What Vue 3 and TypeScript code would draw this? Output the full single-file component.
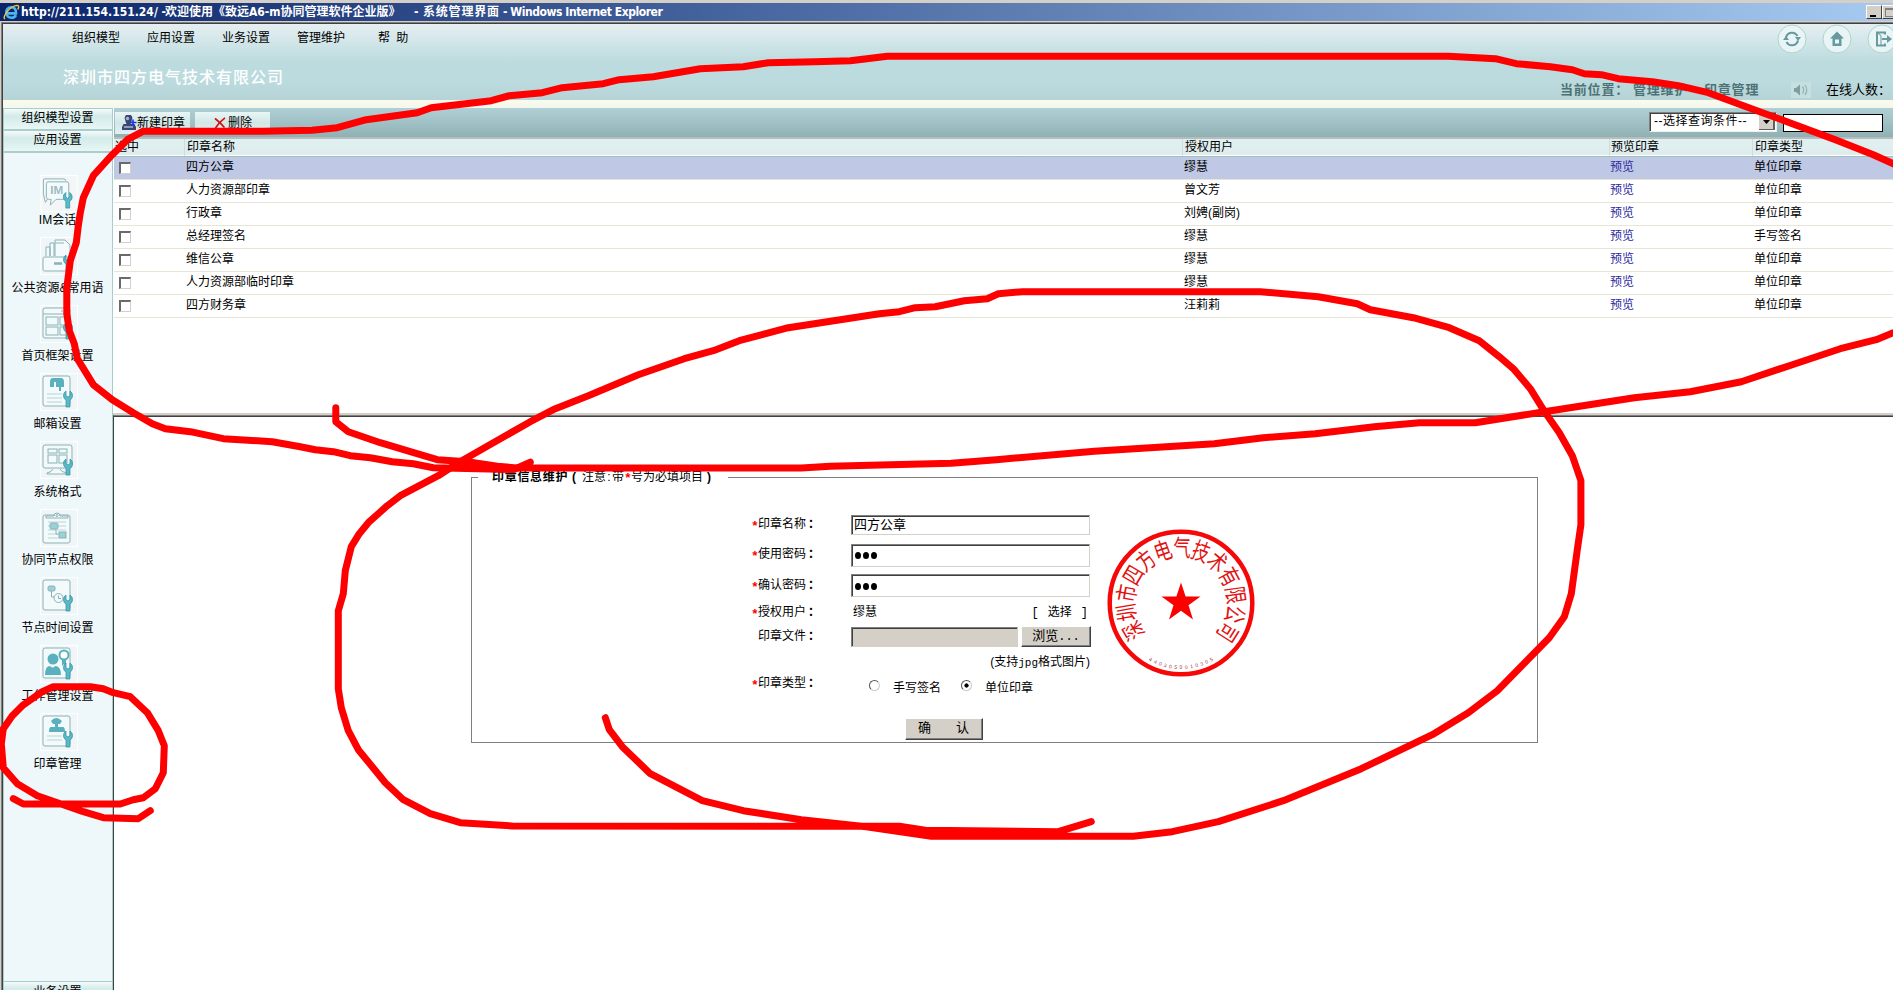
<script setup lang="ts">
interface Seal {
  name: string
  user: string
  kind: string
}

interface NavItem {
  label: string
  icon: string
}

const menus: string[] = ['组织模型', '应用设置', '业务设置', '管理维护', '帮 助']

const seals: Seal[] = [
  { name: '四方公章', user: '缪慧', kind: '单位印章' },
  { name: '人力资源部印章', user: '曾文芳', kind: '单位印章' },
  { name: '行政章', user: '刘娉(副岗)', kind: '单位印章' },
  { name: '总经理签名', user: '缪慧', kind: '手写签名' },
  { name: '维信公章', user: '缪慧', kind: '单位印章' },
  { name: '人力资源部临时印章', user: '缪慧', kind: '单位印章' },
  { name: '四方财务章', user: '汪莉莉', kind: '单位印章' },
]

const navItems: NavItem[] = [
  { label: 'IM会话', icon: 'im' },
  { label: '公共资源&常用语', icon: 'drawer' },
  { label: '首页框架设置', icon: 'frame' },
  { label: '邮箱设置', icon: 'mail' },
  { label: '系统格式', icon: 'screen' },
  { label: '协同节点权限', icon: 'clipboard' },
  { label: '节点时间设置', icon: 'time' },
  { label: '工作管理设置', icon: 'person' },
  { label: '印章管理', icon: 'seal' },
]

const company = '深圳市四方电气技术有限公司'
const sealChars = company.split('').map((c, i) => ({ c, turn: `rotate(${(i - 6) * 20.2 + 1})` }))
const sealDigits = '4403050010305'.split('').map((c, i) => ({ c, turn: `rotate(${(6 - i) * 4.7})` }))

const strokes: string[] = [
  '1893,163 1873,154 1835,139 1784,120 1754,109 1708,92 1678,85 1652,81 1618,78 1601,74 1584,73 1572,69 1550,66 1516,63 1495,58 1448,55.5 887,55.5 850,60 815,61 768,62 743,66 700,68 653,76 619,79 603,83 562,87 542,92 509,95 491,100 431,107 417,112 366,119 337,127 312,129.5 263,130.5 143,130.5 127,139 112,154 93,175 83,197 80,212 78,225 76,242 70,260 66.5,287 66.5,313 69,330 74,343 77,358 93,384 112,399 133,412 152,423 165,428 190,431 223,438 272,441 300,446 315,449 333,451 350,455 370,457 392,461 413,463 433,467 513,469 530,461.5',
  '335.5,407 335.5,421 348,431 380,442 410,451 437,459 467,461 497,465.5 517,467.3 801,467.3 830,465.5 951,462.5 996,459 1094,450.6 1214,443 1263,437 1315,433 1374,426 1419,422 1475,422 1544,411 1634,397 1690,391 1741,381 1792,364 1840,348 1876,339 1893,332',
  '1091,821 1058,831 925,829.5 899,825.6 512,825.3 460,822 430,813 403,799 385,782 358,749 348,730 341,707 338,688 338,610 343,593 345,570 351,546 359,533 368,522 387,505 400,495 438,475 458,462 493,442 530,421 555,408 588,395 638,374 684,358 713,350 739,340 788,327 879,313 899,311 915,307 935,306 964,300 987,298 998,293 1022,291 1260,291 1318,296 1357,303 1370,309 1413,317 1449,327 1479,340 1499,356 1514,369 1530,388 1543,409 1559,432 1572,455 1580.6,480 1580.6,524 1577,549 1571,593 1564,616 1549,637 1497,690 1468,712 1432,734 1361,768 1283,800 1218,821 1172,831 1133,835.6 931,835.6 866,826 801,819 743,810 702,800 650,773 622,746 609,729 605,717',
  '13,798 23,803.3 120,803.3 133,799 143,797 155,788 163,772 164,745 158,730 147,712 130,696 113,692 103,688 90,686 53,686 42,691 22,705 12,715 3,728 1,743 3,767 17,783 37,795 60,803 83,811 103,817 138,818 150,810',
]
</script>

<template>
  <div class="window" lang="zh-CN">
    <div class="titlebar">
      <svg class="ie" viewBox="0 0 18 18">
        <path d="M3.5 10h10.3c.3-4.6-2.200-6.600-5-6.600-3.200 0-5.300 2.400-5.300 5.600 0 3.400 2.200 5.600 5.500 5.600 2.200 0 3.800-.9 4.700-2.800" fill="none" stroke="#4db5f0" stroke-width="2.800" />
        <path d="M2 16C-1 13 8 2 15 1.500c2.500 0 1.500 3 .6 4.300" fill="none" stroke="#f5c431" stroke-width="1.500" />
      </svg>
      <span class="t-url">http://211.154.151.24/ -</span>
      <span class="t-name">欢迎使用《致远A6-m协同管理软件企业版》</span>
      <span class="t-dash">-</span>
      <span class="t-page">系统管理界面</span>
      <span class="t-app">- Windows Internet Explorer</span>
      <div class="win-buttons">
        <i class="win-btn"><b class="min"></b></i>
        <i class="win-btn"><b class="max"></b></i>
      </div>
    </div>

    <div class="frame">
      <header class="header">
        <div class="header-left">
          <nav class="menu"><span v-for="m in menus" :key="m">{{ m }}</span></nav>
          <div class="company">{{ company }}</div>
        </div>
        <div class="header-right">
          <div class="round-buttons">
            <svg viewBox="0 0 30 30">
              <circle cx="15" cy="15" r="14" class="disc" />
              <path d="M9 13.500a6.200 6.200 0 0 1 11.500-1.500M21 16.500a6.200 6.200 0 0 1-11.500 1.500" class="glyph" />
              <path d="M18 13h6l-3 4zM6 16h6l-3-4z" class="solid" />
            </svg>
            <svg viewBox="0 0 30 30">
              <circle cx="15" cy="15" r="14" class="disc" />
              <path d="M15 7.500l7 7h-2.500v7.500h-9v-7.500H8zM13 15.500v4h4v-4z" class="solid" fill-rule="evenodd" />
            </svg>
            <svg viewBox="0 0 30 30">
              <circle cx="15" cy="15" r="14" class="disc" />
              <path d="M18 10.500V8.500h-8v13h8v-2" class="glyph" />
              <path d="M10 8.500l4 3v10" class="glyph thin" />
              <path d="M15 14h5v-3l5 4-5 4v-3h-5z" class="solid" />
            </svg>
          </div>
          <div class="where">
            <b class="here">当前位置：</b><b class="crumb">管理维护</b><b class="sep">-</b><b class="crumb">印章管理</b>
            <svg class="sound" viewBox="0 0 20 16">
              <path d="M3 6h2l4-3.500v11L5 10H3z" fill="#7d9f9f" />
              <path d="M11.500 4.500q2.500 3.500 0 7M14 3q3.500 5 0 10" fill="none" stroke="#98b4b4" stroke-width="1.300" />
            </svg>
            <span class="online">在线人数：</span>
          </div>
        </div>
      </header>
      <div class="strip"></div>

      <div class="body">
        <aside class="sidebar">
          <div class="group">组织模型设置</div>
          <div class="group">应用设置</div>
          <div class="nav">
            <div v-for="n in navItems" :key="n.icon" class="nav-item" :class="{ first: n.icon === 'im' }">
              <svg class="nav-icon" viewBox="0 0 38 38">
                <rect x=".5" y=".5" width="37" height="37" :fill="n.icon === 'im' ? '#f3f5f6' : '#f0f6f8'" stroke="#fff" />
                <g v-if="n.icon === 'im'" class="ln">
                  <path d="M3 20V5q0-1 1-1h20q2 0 2 2" />
                  <path d="M8 7h19q2 0 2 2v14q0 2-2 2H16l-6 6 1-6H9q-3 0-3-2V9q0-2 2-2zM3 20l2 8 2-3" />
                  <text x="10" y="19.500" class="im">IM</text>
                </g>
                <g v-else-if="n.icon === 'drawer'" class="ln">
                  <path d="M6 19V10h4v9M10 19V6h4v13M15 19V3h10l5 5v11M15 6h9" />
                  <rect x="3" y="20" width="28" height="14" rx="1.500" />
                  <path d="M14 26.500h8" stroke-width="2.500" />
                </g>
                <g v-else-if="n.icon === 'frame'" class="ln">
                  <rect x="3" y="3" width="27" height="30" rx="2" />
                  <path d="M3 9h27M21 6h2" />
                  <rect x="6" y="12" width="12" height="8" /><rect x="6" y="22" width="12" height="8" />
                  <rect x="20" y="12" width="9" height="8" /><rect x="20" y="22" width="7" height="8" />
                </g>
                <g v-else-if="n.icon === 'mail'" class="ln">
                  <rect x="3" y="3" width="27" height="30" rx="2" />
                  <path d="M10 14V9q0-4 3-4h8q3 0 3 4v5h-3v4h-2v-4h-3V9h-2v5z" fill="#5ab0bd" stroke="none" />
                  <path d="M7 21h15M7 25h15M7 29h15" class="pale" />
                </g>
                <g v-else-if="n.icon === 'screen'" class="ln">
                  <rect x="3" y="4" width="29" height="23" rx="2" />
                  <rect x="8" y="8" width="9" height="4" /><rect x="19" y="8" width="8" height="4" />
                  <rect x="8" y="14" width="9" height="8" /><rect x="19" y="14" width="8" height="8" />
                  <path d="M13 28q-1 3-6 4v1h20M20 28q1 3 7 4" />
                </g>
                <g v-else-if="n.icon === 'clipboard'" class="ln">
                  <rect x="3" y="6" width="27" height="28" rx="2" />
                  <path d="M6 9V7h8q0-3 3-3t3 3h8v2z" fill="#f3fafb" /><circle cx="17" cy="6.500" r="1" />
                  <path d="M8 13h18M8 17h2M18 17h8M8 21h18M8 25h10M8 29h10" class="pale" />
                  <rect x="10" y="14" width="8" height="6" rx="1.500" fill="#9bd0d8" /><rect x="19" y="23" width="7" height="6" fill="#9bd0d8" />
                  <path d="M16 20v5h3" />
                </g>
                <g v-else-if="n.icon === 'time'" class="ln">
                  <rect x="3" y="3" width="27" height="30" rx="2" />
                  <rect x="8" y="9" width="7" height="5" rx="1.500" fill="#9bd0d8" />
                  <path d="M11.500 14v6H15" /><circle cx="18.500" cy="21" r="4.500" /><path d="M18.500 18.500v3h2.500" />
                </g>
                <g v-else-if="n.icon === 'person'" class="ln">
                  <rect x="3" y="3" width="27" height="30" rx="2" />
                  <path d="M5 30q0-9 5-9 3 3 5 0 6 0 6 9z" fill="#5ab0bd" stroke="none" />
                  <circle cx="13" cy="14" r="5.500" fill="#5ab0bd" stroke="none" />
                  <circle cx="24" cy="10" r="4.500" fill="#fff" stroke="#5ab0bd" stroke-width="2" />
                  <path d="M22 14v7l2-2 2 2v-7" fill="#5ab0bd" stroke="none" />
                </g>
                <g v-else class="ln">
                  <rect x="3" y="3" width="27" height="30" rx="2" />
                  <path d="M11 8q5-6 11 0l-2 3h-2v3h5q2 0 2 5H9q0-5 2-5h4v-3h-2z" fill="#5ab0bd" stroke="none" />
                  <path d="M7 23h15M7 27h15" class="pale" />
                </g>
                <path v-if="n.icon !== 'clipboard'" class="wrench" d="M26 18v4.500l2 1.500 2-1.500V18q3 2 2.500 5.500-.5 2.500-2.500 3.500v7h-4v-7q-2-1-2.500-3.500Q23 20 26 18z" />
              </svg>
              <span>{{ n.label }}</span>
            </div>
          </div>
          <div class="group last">业务设置</div>
        </aside>

        <main class="main">
          <section class="list">
            <div class="toolbar">
              <div class="tool">
                <svg class="stamp-ico" viewBox="0 0 16 16">
                  <path d="M4 4.500a3.800 3.800 0 1 1 7 0Q10.500 7 9.500 9h4l1.500 3v3H1v-3l1.500-3h3Q4.500 7 4 4.500z" fill="#3b4672" />
                  <circle cx="6.500" cy="3.500" r="1.700" fill="#a7b0d3" /><path d="M3 12h9" stroke="#eef" />
                  <path d="M12 4.500v6M9 7.500h6.500" stroke="#1433ff" stroke-width="1.600" />
                </svg>
                <span>新建印章</span>
              </div>
              <div class="tool center">
                <svg class="del-ico" viewBox="0 0 12 12"><path d="M1 1.500q4 3 9.500 9M11 .8Q5 5 1.500 11" fill="none" stroke="#cf1010" stroke-width="1.600" /></svg>
                <span>删除</span>
              </div>
              <div class="select"><span>--选择查询条件--</span><i><svg viewBox="0 0 7 4"><path d="M0 0h7L3.500 4z" /></svg></i></div>
              <div class="query"></div>
            </div>
            <div class="row head">
              <span>选中</span><span>印章名称</span><span>授权用户</span><span>预览印章</span><span>印章类型</span>
            </div>
            <div v-for="(s, i) in seals" :key="s.name" class="row" :class="{ selected: i === 0 }">
              <span><i class="check"></i></span>
              <span>{{ s.name }}</span>
              <span>{{ s.user }}</span>
              <span><a>预览</a></span>
              <span>{{ s.kind }}</span>
            </div>
          </section>

          <section class="detail">
            <fieldset class="box">
              <legend>
                <b>印章信息维护</b><b class="paren">(</b><span>注意</span><span class="colon">:</span><span>带</span><em>*</em><span>号为必填项目</span><b class="close">)</b>
              </legend>
              <div class="form">
                <div class="fields">
                  <div class="field r1"><label><em>*</em>印章名称<b>：</b></label><div class="input short">四方公章</div></div>
                  <div class="field r2"><label><em>*</em>使用密码<b>：</b></label><div class="input"><i class="dot"></i><i class="dot"></i><i class="dot"></i></div></div>
                  <div class="field r3"><label><em>*</em>确认密码<b>：</b></label><div class="input"><i class="dot"></i><i class="dot"></i><i class="dot"></i></div></div>
                  <div class="field r4"><label><em>*</em>授权用户<b>：</b></label><div class="plain"><span>缪慧</span><span class="pick"><span>[</span><span>选择</span><span>]</span></span></div></div>
                  <div class="field r5"><label><em></em>印章文件<b>：</b></label><div class="input file"></div><div class="button browse">浏览<span>...</span></div></div>
                  <div class="hint">(支持<span>jpg</span>格式图片)</div>
                  <div class="field r6">
                    <label><em>*</em>印章类型<b>：</b></label>
                    <div class="radios"><i class="radio"></i><span>手写签名</span><i class="radio on"></i><span>单位印章</span></div>
                  </div>
                  <div class="actions"><div class="button ok"><span>确</span><span>认</span></div></div>
                </div>
                <svg class="seal" viewBox="-75 -75 150 150">
                  <circle r="71.300" fill="none" stroke="#f60808" stroke-width="4.500" />
                  <path d="M0-20.500 4.600-6.500H19.500L7.500 2.200 12 16.500 0 7.700-12 16.500-7.500 2.200-19.500-6.500H-4.600z" fill="#fb0000" />
                  <g v-for="(s, i) in sealChars" :key="i" :transform="s.turn"><text class="arc" transform="translate(0 -46.500) scale(.86 1.180)">{{ s.c }}</text></g>
                  <g v-for="(s, i) in sealDigits" :key="'d' + i" :transform="s.turn"><text class="digit" y="66">{{ s.c }}</text></g>
                </svg>
              </div>
            </fieldset>
          </section>
        </main>
      </div>
    </div>

    <svg class="ink" viewBox="0 0 1893 990">
      <g transform="translate(.3 .7)">
        <polyline v-for="(p, i) in strokes" :key="i" :points="p" />
      </g>
    </svg>
  </div>
</template>

<style>
body {
  overflow: hidden;
}
</style>

<style scoped>
.window {
  position: relative;
  display: flex;
  flex-direction: column;
  box-sizing: border-box;
  width: 1893px;
  height: 990px;
  overflow: hidden;
  background: #d4d0c8;
  color: #000;
  font: 12px/16px 'Liberation Sans', 'Noto Sans CJK SC', sans-serif;
  white-space: nowrap;
}
i,
em {
  font-style: normal;
}
.titlebar {
  display: flex;
  align-items: center;
  flex: none;
  height: 18px;
  margin-top: 3px;
  padding-left: 3px;
  background: linear-gradient(90deg, #0a246a, #a6caf0);
  color: #fff;
  font: bold 12px/18px 'DejaVu Sans Condensed', 'Noto Sans CJK SC', sans-serif;
}
.titlebar span {
  flex: none;
}
.ie {
  width: 17px;
  height: 17px;
  margin-right: 1px;
}
.t-url {
  width: 144px;
}
.t-name {
  width: 249px;
}
.t-dash {
  width: 9px;
}
.t-page {
  width: 80px;
  letter-spacing: 0.8px;
}
.t-app {
  letter-spacing: -0.45px;
}
.win-buttons {
  display: flex;
  margin-left: auto;
  margin-right: -5px;
}
.win-btn {
  display: flex;
  box-sizing: border-box;
  width: 16px;
  height: 14px;
  border: 1px solid;
  border-color: #fff #404040 #404040 #fff;
  background: #d4d0c8;
}
.min {
  width: 6px;
  height: 2px;
  margin: 9px 0 0 3px;
  background: #000;
}
.max {
  box-sizing: border-box;
  width: 10px;
  height: 9px;
  margin: 2px 0 0 2px;
  border: 1px solid #808080;
  border-top-width: 2px;
}
.frame {
  display: flex;
  flex: 1;
  flex-direction: column;
  min-height: 0;
  margin: 1px 0 0 1px;
  border-top: 1px solid #808080;
  border-left: 1px solid #808080;
  box-shadow: inset 1px 1px #404040;
}
.header {
  display: flex;
  flex: none;
  height: 76px;
  margin: 1px 0 0 1px;
  background: linear-gradient(#e6eff1 0, #d5e7ea 20%, #bcdbde 50%, #bcdbde 75%, #b6d4d7);
}
.header-left {
  flex: none;
  width: 1554px;
}
.menu {
  display: flex;
  gap: 27px;
  padding: 6px 0 0 69px;
}
.menu span {
  width: 48px;
  line-height: 17px;
}
.menu span:last-child {
  padding-left: 6px;
  word-spacing: 3px;
}
.company {
  margin-top: 18px;
  padding-left: 60px;
  color: #fff;
  font-size: 16px;
  font-weight: 500;
  letter-spacing: 1px;
  line-height: 25px;
}
.header-right {
  flex: none;
}
.round-buttons {
  display: flex;
  gap: 15px;
  padding-left: 220px;
}
.round-buttons svg {
  flex: none;
  width: 30px;
  height: 30px;
}
.disc {
  fill: #e9f5f5;
  stroke: #add3d2;
}
.glyph {
  fill: none;
  stroke: #67999f;
  stroke-width: 2;
}
.thin {
  stroke-width: 1;
}
.solid {
  fill: #67999f;
}
.where {
  display: flex;
  align-items: center;
  height: 20px;
  margin-top: 26px;
  padding-left: 3px;
  font-size: 13px;
}
.where b {
  color: #4d7276;
  letter-spacing: 0.8px;
}
.here {
  width: 73px;
}
.crumb {
  width: 56px;
}
.sep {
  width: 15px;
  text-align: center;
}
.sound {
  width: 20px;
  height: 16px;
  margin-left: 31px;
  background: #c6dfe0;
}
.online {
  margin-left: 15px;
}
.strip {
  flex: none;
  height: 8px;
  margin-left: 1px;
  background: linear-gradient(#f9fbea, #f3f7ee);
}
.body {
  display: flex;
  flex: 1;
  min-height: 0;
  margin-left: 1px;
  background: #fff;
}
.sidebar {
  display: flex;
  flex: none;
  flex-direction: column;
  box-sizing: border-box;
  width: 110px;
  border: solid #a9cccc;
  border-width: 1px 1px 0;
  background: #eef7f9;
}
.group {
  flex: none;
  box-sizing: border-box;
  height: 22px;
  padding-right: 1px;
  border-bottom: 2px solid #accdcb;
  background: linear-gradient(#f4fbfa, #d3ebea 35%, #ddf1ef 70%, #e8f7f5);
  line-height: 18px;
  text-align: center;
}
.last {
  border-top: 1px solid #a9cccc;
  line-height: 20px;
}
.nav {
  display: flex;
  flex: none;
  flex-direction: column;
  height: 828px;
}
.nav-item {
  display: flex;
  flex: none;
  flex-direction: column;
  align-items: center;
  justify-content: space-between;
  box-sizing: border-box;
  height: 59px;
  margin-bottom: 9px;
  padding-right: 1px;
}
.nav-item.first {
  height: 53px;
  margin-top: 22px;
}
.nav-icon {
  width: 38px;
  height: 38px;
  margin-left: 2px;
}
.first .nav-icon {
  height: 37px;
}
.nav-item span {
  line-height: 16px;
}
.ln {
  fill: #f3fafb;
  stroke: #8bb1b5;
  stroke-width: 1;
}
.pale {
  stroke: #b9d3d6;
}
.im {
  fill: #9fbcbf;
  stroke: none;
  font: bold 12px 'Liberation Sans', sans-serif;
}
.wrench {
  fill: #5ab8c7;
  stroke: #2f91a1;
  stroke-width: 0.7;
}
.main {
  display: flex;
  flex: 1;
  flex-direction: column;
  min-width: 0;
}
.list {
  flex: none;
  box-sizing: border-box;
  height: 307px;
  padding-left: 1px;
}
.toolbar {
  display: flex;
  box-sizing: border-box;
  height: 31px;
  padding-top: 4px;
  border-bottom: 2px solid #b8bcbd;
  background: linear-gradient(#b0d0d5, #8fb1b4);
}
.tool {
  display: flex;
  flex: none;
  align-items: center;
  box-sizing: border-box;
  width: 75px;
  height: 22px;
  margin-left: 1px;
  padding-left: 6px;
  background: linear-gradient(#e8f5f5, #d1e7e6 50%, #e0f1f0);
}
.tool.center {
  margin-left: 5px;
  padding-left: 19px;
}
.stamp-ico {
  width: 16px;
  height: 16px;
}
.del-ico {
  width: 12px;
  height: 12px;
  margin-right: 2px;
}
.select {
  display: flex;
  flex: none;
  box-sizing: border-box;
  width: 128px;
  height: 20px;
  margin-left: auto;
  border: 1px solid;
  border-color: #808080 #f0efe9 #f0efe9 #808080;
  background: #fff;
  box-shadow: inset 1px 1px #404040;
  letter-spacing: 0.5px;
  line-height: 17px;
}
.select span {
  flex: 1;
  padding-left: 4px;
}
.select i {
  display: flex;
  align-items: center;
  justify-content: center;
  width: 14px;
  margin: 2px 1px 1px 0;
  border-right: 2px solid #606060;
  border-bottom: 1px solid #606060;
  background: #d4d0c8;
}
.select i svg {
  width: 7px;
  height: 4px;
}
.query {
  flex: none;
  box-sizing: border-box;
  width: 100px;
  height: 18px;
  margin: 2px 10px 0 6px;
  border: 1px solid #000;
  background: #fff;
}
.row {
  display: grid;
  grid-template-columns: 70px 998px 427px 143px 1fr;
  box-sizing: border-box;
  height: 23px;
  border-bottom: 1px solid #e6e5d6;
  line-height: 21px;
}
.row > span {
  padding-left: 2px;
}
.row > span:nth-child(4) {
  padding-left: 1px;
}
.row > span:first-child {
  padding-left: 5px;
}
.row.head {
  height: 18px;
  border-bottom: 1px solid #9fbfbb;
  background: linear-gradient(#dff0f0, #e0ecee);
  box-shadow: inset 0 -1px #fff;
  line-height: 17px;
}
.row.head > span {
  border-left: 1px solid #d3dcdc;
}
.row.head > span:first-child {
  padding-left: 1px;
  border: 0;
}
.row.selected {
  background: #bfc9e6;
}
.row a {
  color: #2b2ba0;
}
.check {
  display: block;
  box-sizing: border-box;
  width: 12px;
  height: 12px;
  margin-top: 5px;
  border: solid;
  border-width: 2px 1px 1px 2px;
  border-color: #6a6a6a #d4d0c8 #d4d0c8 #6a6a6a;
  background: #fff;
}
.detail {
  flex: 1;
  min-height: 0;
  border-top: 1px solid #808080;
  border-left: 1px solid #404040;
  box-shadow: 0 -2px #d4d0c8, inset 0 1px #404040;
}
.box {
  box-sizing: border-box;
  width: 1067px;
  height: 274px;
  margin: 53px 0 0 357px;
  padding: 0 6px;
  border: 1px solid #808080;
}
.box legend {
  display: flex;
  box-sizing: border-box;
  width: 250px;
  padding: 0 0 0 14px;
  line-height: 16px;
}
.box legend > b:first-child {
  width: 80px;
  letter-spacing: 0.7px;
}
.paren {
  width: 10px;
}
.colon {
  width: 6px;
  text-align: center;
}
em {
  display: inline-block;
  width: 7px;
  margin-left: -1px;
  color: #f00;
  font: bold 13px/10px 'Liberation Mono', monospace;
  vertical-align: -2px;
}
legend em {
  margin: 5px 0 0;
}
.close {
  margin-left: 4px;
}
.form {
  display: flex;
  align-items: flex-start;
  padding: 25px 0 0 274px;
}
.fields {
  width: 340px;
}
.field {
  display: flex;
  align-items: center;
}
.field label {
  flex: none;
  width: 99px;
  height: 18px;
}
.field label b {
  margin-left: 2px;
}
.r1 {
  height: 30px;
}
.r2 {
  height: 30px;
}
.r3 {
  height: 31px;
}
.r4 {
  height: 24px;
}
.r5 {
  height: 23px;
}
.input {
  display: flex;
  align-items: center;
  box-sizing: border-box;
  width: 239px;
  height: 23px;
  padding-left: 2px;
  border: 1px solid;
  border-color: #808080 #d4d0c8 #d4d0c8 #808080;
  background: #fff;
  box-shadow: inset 1px 1px #404040;
  font-size: 13px;
}
.short {
  height: 20px;
}
.file {
  width: 167px;
  height: 20px;
  background: #d4d0c8;
}
.dot {
  width: 6px;
  height: 7px;
  margin: 1px 1px 0;
  border-radius: 50%;
  background: #000;
}
.plain {
  display: flex;
  justify-content: space-between;
  width: 235px;
  padding-left: 2px;
  font-family: 'Liberation Mono', 'Noto Sans CJK SC', monospace;
}
.pick {
  display: flex;
  gap: 9px;
}
.button {
  box-sizing: border-box;
  border: 1px solid;
  border-color: #fff #404040 #404040 #fff;
  background: #d4d0c8;
  box-shadow: inset -1px -1px #808080;
  font-size: 13px;
  text-align: center;
}
.browse {
  width: 70px;
  height: 21px;
  margin-left: 3px;
  line-height: 17px;
}
.browse span {
  font-family: 'Liberation Mono', monospace;
  font-size: 12px;
}
.hint {
  width: 338px;
  height: 26px;
  line-height: 29px;
  text-align: right;
}
.hint span {
  font-family: 'Liberation Mono', monospace;
  font-size: 11px;
}
.r6 {
  height: 20px;
}
.radios {
  display: flex;
  align-items: center;
  padding: 8px 0 0 18px;
}
.radio {
  box-sizing: border-box;
  width: 11px;
  height: 11px;
  margin: 0 13px 5px 0;
  border: 1px solid;
  border-color: #555 #ccc #ccc #555;
  border-radius: 50%;
}
.radio + span {
  width: 68px;
}
.radio.on {
  background: radial-gradient(#000 0 1.8px, #fff 2.4px);
}
.actions {
  padding: 24px 0 0 153px;
}
.ok {
  display: flex;
  justify-content: space-between;
  width: 78px;
  height: 22px;
  padding: 0 13px 0 12px;
  line-height: 17px;
}
.seal {
  flex: none;
  width: 150px;
  height: 150px;
  margin: 18px 0 0 14px;
}
.arc {
  fill: #e11414;
  font-size: 20px;
  text-anchor: middle;
}
.digit {
  fill: #a8323f;
  font-size: 5px;
  text-anchor: middle;
}
/* Pen marks drawn over the whole window. */
.ink {
  position: absolute;
  top: 0;
  left: 0;
  width: 1893px;
  height: 990px;
  pointer-events: none;
}
.ink polyline {
  fill: none;
  stroke: #f00;
  stroke-width: 7;
  stroke-linecap: round;
  stroke-linejoin: round;
}
</style>
